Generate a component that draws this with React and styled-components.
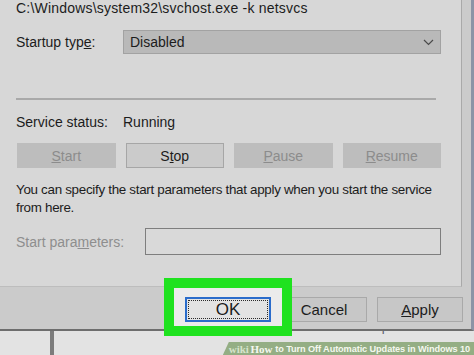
import React from 'react';
import styled, { createGlobalStyle } from 'styled-components';

const GlobalStyle = createGlobalStyle`
  html, body {
    margin: 0;
    padding: 0;
    background: #e4e4e4;
    overflow: hidden;
  }
  body {
    font-family: "Liberation Sans", Arial, sans-serif;
    font-size: 14px;
    color: #1c1c1c;
  }
`;

const Screen = styled.div`
  position: relative;
  width: 474px;
  height: 355px;
  overflow: hidden;
  display: flex;
  flex-direction: column;
`;

const Dialog = styled.div`
  width: 474px;
  flex: none;
  background: #cbcbcb;
  border-right: 3px solid #8c94a6;
  border-bottom: 2px solid #6e6e6e;
  box-sizing: border-box;
  display: flex;
  flex-direction: column;
`;

const TabPage = styled.div`
  width: 462px;
  height: 287px;
  box-sizing: border-box;
  background: #d7d7d7;
  border-right: 1px solid #a9a9a9;
  border-bottom: 1px solid #bdbdbd;
  padding: 0 20px 0 16px;
  display: flex;
  flex-direction: column;
`;

const PathLine = styled.div`
  height: 17px;
  line-height: 17px;
  letter-spacing: 0.2px;
  white-space: nowrap;
`;

const Row = styled.div`
  display: flex;
  align-items: center;
  margin-top: ${p => p.$top}px;
  height: ${p => p.$h}px;
`;

const Label = styled.span`
  width: ${p => p.$w}px;
  flex: none;
  color: ${p => (p.$dim ? '#8e8e8e' : 'inherit')};
  white-space: nowrap;
`;

const Combo = styled.div`
  width: 318px;
  height: 24px;
  box-sizing: border-box;
  background: #b9b9b9;
  border: 1px solid #a2a2a2;
  display: flex;
  align-items: center;
  justify-content: space-between;
  padding: 0 6px 0 6px;
`;

const Separator = styled.div`
  width: 420px;
  height: 2px;
  background: #a9a9a9;
  margin-top: 44px;
`;

const ButtonGrid = styled.div`
  display: grid;
  grid-template-columns: repeat(4, 1fr);
  gap: 10px;
  width: 424px;
  height: 25px;
  margin: 12px 0 0 1px;
`;

const ServiceButton = styled.div`
  box-sizing: border-box;
  display: flex;
  align-items: center;
  justify-content: center;
  background: ${p => (p.$disabled ? '#bdbdbd' : '#cbcbcb')};
  border: 1px solid ${p => (p.$disabled ? '#bdbdbd' : '#a6a6a6')};
  color: ${p => (p.$disabled ? '#8c8c8c' : '#1c1c1c')};
`;

const Paragraph = styled.p`
  margin: 13px 0 0;
  line-height: 18px;
  width: 440px;
  font-size: 13.4px;
  letter-spacing: -0.3px;
`;

const ParamInput = styled.div`
  width: 296px;
  height: 27px;
  box-sizing: border-box;
  border: 1px solid #7e7e7e;
  background: #d9d9d9;
`;

const ButtonBar = styled.div`
  height: 42px;
  display: flex;
  justify-content: flex-end;
  align-items: flex-start;
  gap: 10px;
  padding: 10px 8px 0 0;
  box-sizing: border-box;
`;

const HighlightSlot = styled.div`
  position: relative;
  display: flex;
`;

const GreenFrame = styled.div`
  position: absolute;
  left: -21px;
  right: -21px;
  top: -19px;
  bottom: -14px;
  border: 10px solid #1fe21f;
  background: #ebebeb;
  z-index: 1;
`;

const DialogButton = styled.div`
  position: relative;
  z-index: ${p => (p.$focus ? 2 : 0)};
  width: 86px;
  height: 25px;
  box-sizing: border-box;
  display: flex;
  align-items: center;
  justify-content: center;
  background: ${p => (p.$focus ? '#e3e3e3' : '#c7c7c7')};
  border: ${p => (p.$focus ? '2px solid #2a6ccb' : '1px solid #a9a9a9')};
  font-size: ${p => (p.$focus ? 17 : 15)}px;

  ${p =>
    p.$focus &&
    `
    &::after {
      content: '';
      position: absolute;
      inset: 1px;
      border: 1px dotted #2b2b2b;
    }
  `}
`;

const Behind = styled.div`
  position: relative;
  flex: 1;
  background: #e3e3e3;
  display: flex;
  overflow: hidden;
`;

const Column = styled.div`
  margin-left: 50px;
  width: 3px;
  border-left: 2px solid #7c7c7c;
  border-right: 2px solid #7c7c7c;
`;

const BehindText = styled.div`
  margin: -12px 0 0 262px;
  font-size: 13px;
  color: #5a6070;
  white-space: nowrap;
`;

const Banner = styled.div`
  position: absolute;
  right: 0;
  bottom: 0;
  height: 13px;
  background: #94ae84;
  clip-path: polygon(6px 0, 100% 0, 100% 100%, 0 100%);
  display: flex;
  align-items: center;
  padding: 0 4px 0 6px;
  box-sizing: border-box;
  font-family: "Liberation Sans", Arial, sans-serif;
  font-weight: bold;
  font-size: 9.2px;
  letter-spacing: -0.1px;
  color: #f4f8ef;
  white-space: nowrap;
`;

const Wiki = styled.span`
  font-family: "Liberation Serif", "Times New Roman", serif;
  font-size: 11px;
  color: #d6e4cb;
  margin-right: 2px;
`;

const How = styled.span`
  font-family: "Liberation Serif", "Times New Roman", serif;
  font-size: 11px;
  margin-right: 3px;
`;

const Chevron = () => (
  <svg width="11" height="7" viewBox="0 0 11 7">
    <path d="M1 1l4.5 4.5L10 1" fill="none" stroke="#4a4a4a" strokeWidth="1.2" />
  </svg>
);

export default function App() {
  return (
    <>
      <GlobalStyle />
      <Screen>
        <Dialog>
          <TabPage>
            <PathLine>C:\Windows\system32\svchost.exe -k netsvcs</PathLine>
            <Row $top={13} $h={24}>
              <Label $w={107}>
                Startup typ<u>e</u>:
              </Label>
              <Combo>
                <span>Disabled</span>
                <Chevron />
              </Combo>
            </Row>
            <Separator />
            <Row $top={13} $h={18}>
              <Label $w={107}>Service status:</Label>
              <span>Running</span>
            </Row>
            <ButtonGrid>
              <ServiceButton $disabled>
                <span><u>S</u>tart</span>
              </ServiceButton>
              <ServiceButton>
                <span>S<u>t</u>op</span>
              </ServiceButton>
              <ServiceButton $disabled>
                <span><u>P</u>ause</span>
              </ServiceButton>
              <ServiceButton $disabled>
                <span><u>R</u>esume</span>
              </ServiceButton>
            </ButtonGrid>
            <Paragraph>
              You can specify the start parameters that apply when you start the service
              from here.
            </Paragraph>
            <Row $top={11} $h={27}>
              <Label $w={129} $dim>
                Start para<u>m</u>eters:
              </Label>
              <ParamInput />
            </Row>
          </TabPage>
          <ButtonBar>
            <HighlightSlot>
              <GreenFrame />
              <DialogButton $focus>OK</DialogButton>
            </HighlightSlot>
            <DialogButton>Cancel</DialogButton>
            <DialogButton>
              <span><u>A</u>pply</span>
            </DialogButton>
          </ButtonBar>
        </Dialog>
        <Behind>
          <Column />
          <BehindText>Windows Update Medic Service</BehindText>
          <Banner>
            <Wiki>wiki</Wiki>
            <How>How</How>
            to Turn Off Automatic Updates in Windows 10
          </Banner>
        </Behind>
      </Screen>
    </>
  );
}
